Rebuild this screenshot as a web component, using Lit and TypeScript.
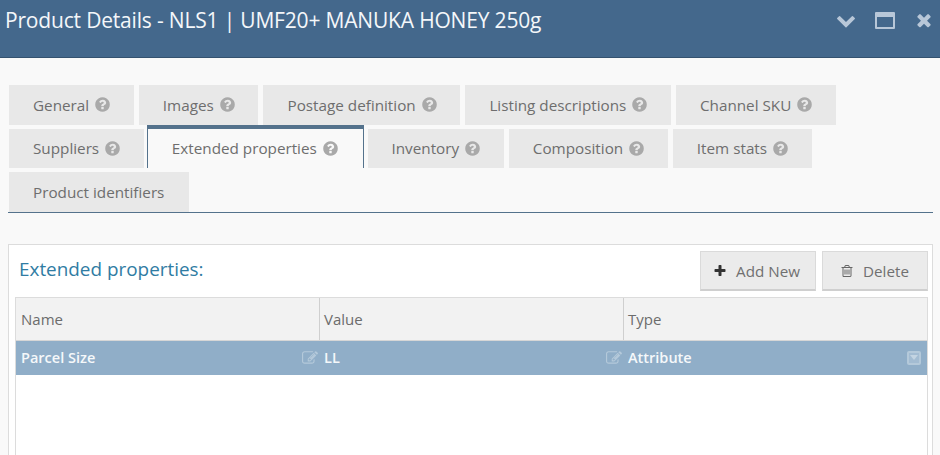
import { LitElement, html, css, svg } from "lit";
import { customElement } from "lit/decorators.js";

const Q = "M1024 1376v-192q0-14-9-23t-23-9h-192q-14 0-23 9t-9 23v192q0 14 9 23t23 9h192q14 0 23-9t9-23zm256-672q0-88-55.5-163t-138.5-116-170-41q-243 0-371 213-15 24 8 42l132 100q7 6 19 6 16 0 25-12 53-68 86-92 34-24 86-24 48 0 85.5 26t37.5 59q0 38-20 61t-68 45q-63 28-115.5 86.5t-52.5 125.5v36q0 14 9 23t23 9h192q14 0 23-9t9-23q0-19 21.5-49.5t54.5-49.5q32-18 49-28.5t46-35 44.5-48 28-60.5 12.5-81zm384 192q0 209-103 385.5t-279.5 279.5-385.5 103-385.5-103-279.5-279.5-103-385.5 103-385.5 279.5-279.5 385.5-103 385.5 103 279.5 279.5 103 385.5z";
const EDIT = "M888 1184l116-116-152-152-116 116v56h96v96h56zm440-720q-16-16-33 1l-350 350q-17 17-1 33t33-1l350-350q17-17 1-33zm80 594v190q0 119-84.5 203.5t-203.5 84.5h-832q-119 0-203.5-84.5t-84.5-203.5v-832q0-119 84.5-203.5t203.5-84.5h832q63 0 117 25 15 7 18 23 3 17-9 29l-49 49q-14 14-32 8-23-6-45-6h-832q-66 0-113 47t-47 113v832q0 66 47 113t113 47h832q66 0 113-47t47-113v-126q0-13 9-22l64-64q15-15 35-7t20 29zm-96-738l288 288-672 672h-288v-288zm444 132l-92 92-288-288 92-92q28-28 68-28t68 28l152 152q28 28 28 68t-28 68z";
const CHEV = "M1683 808l-742 741q-19 19-45 19t-45-19l-742-741q-19-19-19-45.5t19-45.5l166-165q19-19 45-19t45 19l531 531 531-531q19-19 45-19t45 19l166 165q19 19 19 45.5t-19 45.5z";
const TIMES = "M1490 1322q0 40-28 68l-136 136q-28 28-68 28t-68-28l-294-294-294 294q-28 28-68 28t-68-28l-136-136q-28-28-28-68t28-68l294-294-294-294q-28-28-28-68t28-68l136-136q28-28 68-28t68 28l294 294 294-294q28-28 68-28t68 28l136 136q28 28 28 68t-28 68l-294 294 294 294q28 28 28 68z";
const PLUS = "M1600 736v192q0 40-28 68t-68 28h-416v416q0 40-28 68t-68 28h-192q-40 0-68-28t-28-68v-416h-416q-40 0-68-28t-28-68v-192q0-40 28-68t68-28h416v-416q0-40 28-68t68-28h192q40 0 68 28t28 68v416h416q40 0 68 28t28 68z";
const TRASH = "M704 736v576q0 14-9 23t-23 9h-64q-14 0-23-9t-9-23v-576q0-14 9-23t23-9h64q14 0 23 9t9 23zm256 0v576q0 14-9 23t-23 9h-64q-14 0-23-9t-9-23v-576q0-14 9-23t23-9h64q14 0 23 9t9 23zm256 0v576q0 14-9 23t-23 9h-64q-14 0-23-9t-9-23v-576q0-14 9-23t23-9h64q14 0 23 9t9 23zm128 724v-948h-896v948q0 22 7 40.5t14.5 27 10.5 8.5h832q3 0 10.5-8.5t14.5-27 7-40.5zm-672-1076h448l-48-117q-7-9-17-11h-317q-10 2-17 11zm928 32v64q0 14-9 23t-23 9h-96v948q0 83-47 143.5t-113 60.5h-832q-66 0-113-47t-47-139v-966h-96q-14 0-23-9t-9-23v-64q0-14 9-23t23-9h309l70-167q15-37 54-63t79-26h320q40 0 79 26t54 63l70 167h309q14 0 23 9t9 23z";

const icon = (d: string, cls: string) =>
  html`<svg class=${cls} viewBox="0 0 1792 1792" fill="currentColor">${svg`<path d=${d}></path>`}</svg>`;

const TABS: [string, boolean, boolean?][] = [
  ["General", true],
  ["Images", true],
  ["Postage definition", true],
  ["Listing descriptions", true],
  ["Channel SKU", true],
  ["Suppliers", true],
  ["Extended properties", true, true],
  ["Inventory", true],
  ["Composition", true],
  ["Item stats", true],
  ["Product identifiers", false],
];

@customElement("app-root")
export class AppRoot extends LitElement {
  static styles = css`
    :host {
      display: block;
      width: 940px;
      height: 455px;
      overflow: hidden;
      background: #f9f9f9;
      font-family: "Open Sans", sans-serif;
      color: #666;
    }
    .header {
      height: 58px;
      box-sizing: border-box;
      background: #44688c;
      border-bottom: 1px solid #34526f;
      display: flex;
      justify-content: space-between;
      align-items: flex-start;
      padding: 6px 5px 0 5px;
      color: #fff;
    }
    .title {
      font-size: 21px;
      line-height: 28px;
      letter-spacing: -0.18px;
      color: #f4f7fa;
    }
    .controls {
      display: flex;
      align-items: flex-start;
      gap: 19px;
      color: #b8c7d8;
      padding-top: 4px;
      margin-right: 1px;
    }
    .ctl {
      width: 20px;
      height: 20px;
    }
    .win {
      width: 20px;
      height: 17px;
      margin-top: 2px;
      box-sizing: border-box;
      border: 2px solid #b8c7d8;
      border-top-width: 5px;
      border-radius: 1px;
    }
    .tabs {
      margin: 27px 7px 0 8px;
      padding-left: 1px;
      display: flex;
      flex-wrap: wrap;
      gap: 4px 5.2px;
      border-bottom: 1px solid #54728c;
      padding-right: 60px;
    }
    .tab {
      height: 39.5px;
      box-sizing: border-box;
      background: #e8e8e8;
      padding: 0 23.5px 0 24px;
      display: flex;
      align-items: center;
      gap: 6px;
      font-size: 15.25px;
      color: #6e6e6e;
      white-space: nowrap;
    }
    .tab.plain {
      padding-right: 24.5px;
    }
    .tab.active {
      background: #f9f9f9;
      height: 43.5px;
      margin-top: -4px;
      margin-left: -2px;
      margin-right: -1.5px;
      padding-right: 25px;
      border-top: 4px solid #54728c;
      border-left: 1px solid #54728c;
      border-right: 1px solid #54728c;
    }
    .q {
      width: 17px;
      height: 17px;
      margin: 0 -1px;
      color: #a9a9a9;
    }
    .panel {
      margin: 31px 7px 0 8px;
      height: 260px;
      box-sizing: border-box;
      background: #fff;
      border: 1px solid #dcdcdc;
      padding: 6px 4px 0 6px;
    }
    .panel-head {
      display: flex;
      align-items: flex-start;
      height: 46px;
    }
    .panel-title {
      flex: 1;
      margin-left: 4px;
      margin-top: 6px;
      font-size: 18.9px;
      line-height: 25px;
      color: #307ca3;
    }
    .btns {
      display: flex;
      gap: 6px;
    }
    .btn {
      height: 40px;
      box-sizing: border-box;
      background: #ebebeb;
      border: 1px solid #dadada;
      border-bottom: 2px solid #cfcfcf;
      padding-top: 1px;
      display: flex;
      align-items: center;
      justify-content: center;
      gap: 9px;
      font-size: 15.2px;
      color: #707070;
    }
    .btn.add {
      width: 116px;
      padding-right: 3px;
    }
    .btn.del {
      width: 106px;
      padding-right: 1px;
    }
    .plus {
      width: 14px;
      height: 14px;
      color: #333;
    }
    .trash {
      width: 14px;
      height: 14px;
      color: #666;
    }
    .table {
      border: 1px solid #dcdcdc;
      border-bottom: none;
      height: 200px;
      background: #fff;
    }
    .row {
      display: grid;
      grid-template-columns: 304px 304px 1fr;
    }
    .row.headrow {
      height: 43px;
      background: #f2f2f2;
      border-bottom: 1px solid #d6d6d6;
      box-sizing: border-box;
    }
    .hcell {
      display: flex;
      align-items: center;
      padding-left: 4px;
      font-size: 15px;
      color: #6c6c6c;
      border-right: 1px solid #cfcfcf;
    }
    .hcell:first-child,
    .cell:first-child {
      padding-left: 5px;
    }
    .hcell:last-child {
      border-right: none;
    }
    .row.data {
      height: 34px;
      background: #90aec8;
    }
    .cell {
      display: flex;
      align-items: center;
      justify-content: space-between;
      padding: 0 2px 0 4px;
      font-size: 14.5px;
      font-weight: 600;
      color: #f5f8fa;
    }
    .edit {
      width: 16px;
      height: 16px;
      color: #b4c9da;
    }
    .drop {
      width: 14px;
      height: 14px;
      box-sizing: border-box;
      margin-right: 4px;
      background: #a3bcd2;
      border: 2px solid #b4c9da;
      border-radius: 2px;
      display: flex;
      align-items: center;
      justify-content: center;
    }
    .drop::after {
      content: "";
      border-left: 4px solid transparent;
      border-right: 4px solid transparent;
      border-top: 5px solid #c3d4e2;
    }
  `;

  render() {
    return html`
      <div class="header">
        <div class="title">Product Details - NLS1 | UMF20+ MANUKA HONEY 250g</div>
        <div class="controls">
          ${icon(CHEV, "ctl")}
          <div class="win"></div>
          ${icon(TIMES, "ctl")}
        </div>
      </div>
      <div class="tabs">
        ${TABS.map(
          ([label, q, active]) => html`<div class="tab ${active ? "active" : ""} ${q ? "" : "plain"}">
            <span>${label}</span>${q ? icon(Q, "q") : ""}
          </div>`
        )}
      </div>
      <div class="panel">
        <div class="panel-head">
          <div class="panel-title">Extended properties:</div>
          <div class="btns">
            <div class="btn add">${icon(PLUS, "plus")}<span>Add New</span></div>
            <div class="btn del">${icon(TRASH, "trash")}<span>Delete</span></div>
          </div>
        </div>
        <div class="table">
          <div class="row headrow">
            <div class="hcell">Name</div>
            <div class="hcell">Value</div>
            <div class="hcell">Type</div>
          </div>
          <div class="row data">
            <div class="cell"><span>Parcel Size</span>${icon(EDIT, "edit")}</div>
            <div class="cell"><span>LL</span>${icon(EDIT, "edit")}</div>
            <div class="cell"><span>Attribute</span><div class="drop"></div></div>
          </div>
        </div>
      </div>
    `;
  }
}
